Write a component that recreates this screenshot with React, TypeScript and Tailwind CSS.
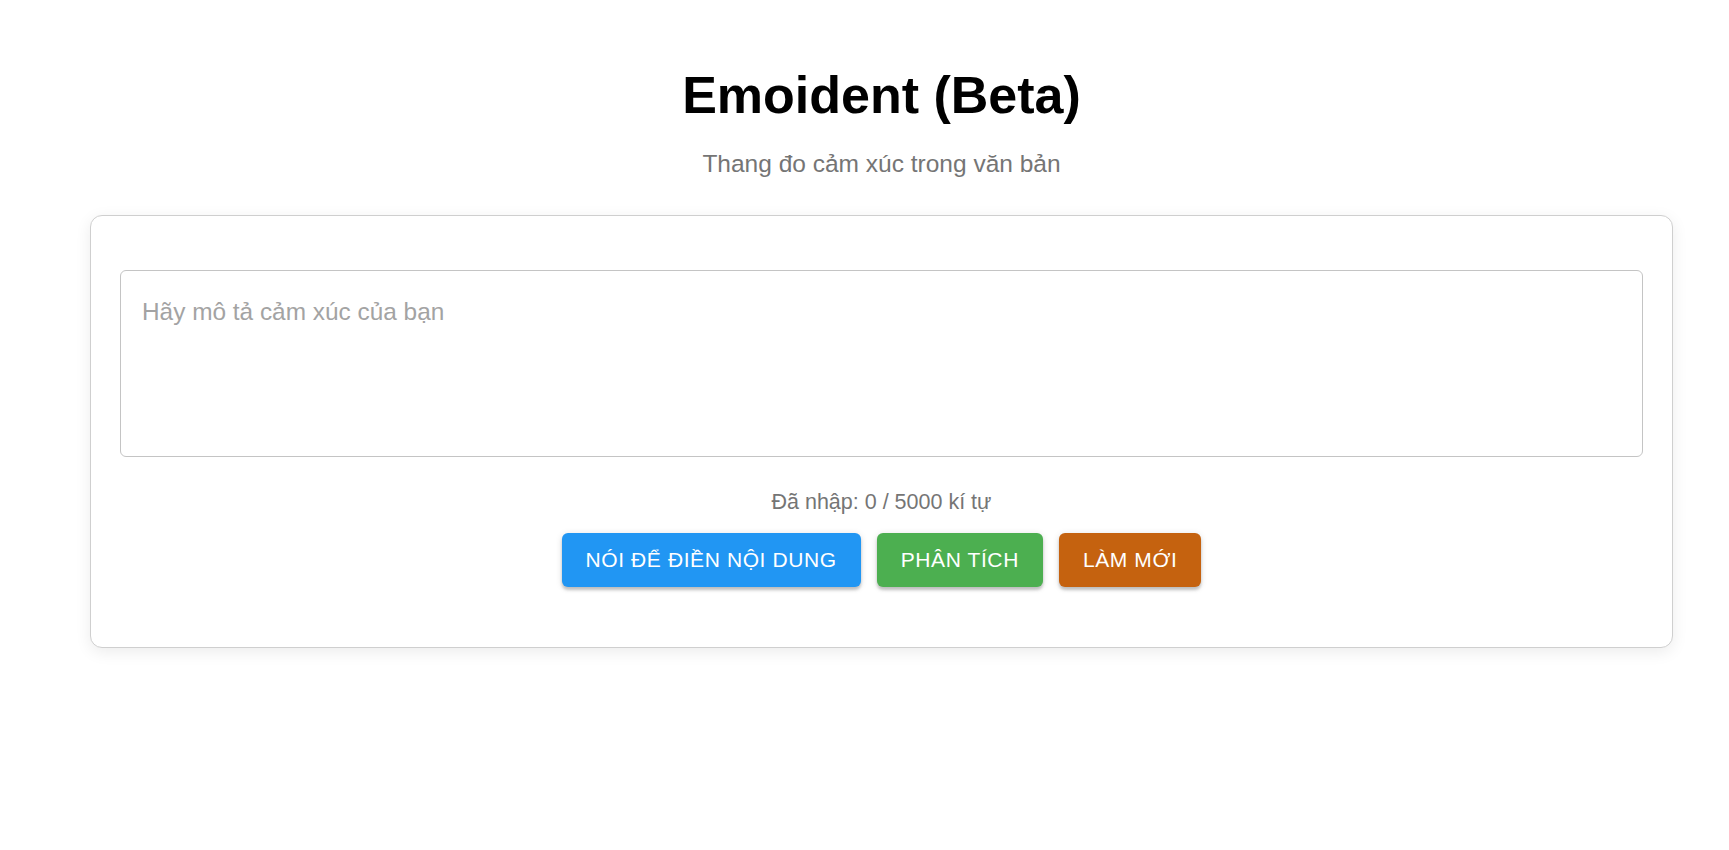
import React, { useState } from 'react';

const MAX_LEN = 5000;

export default function App() {
  const [text, setText] = useState('');

  const onChangeText = (e: React.ChangeEvent<HTMLTextAreaElement>) => {
    setText(e.target.value.slice(0, MAX_LEN));
  };

  return (
    <div className="min-h-screen bg-white pl-[90px] pr-[56px] font-['Liberation_Sans',Arial,sans-serif]">
      <h1 className="pt-[64px] text-center text-[52px] leading-[63px] font-bold text-black">
        Emoident (Beta)
      </h1>
      <p className="mt-[19px] text-center text-[24.5px] leading-[36px] text-[#757575]">
        Thang đo cảm xúc trong văn bản
      </p>

      <div className="mt-[33px] rounded-[12px] border border-[#cfcfcf] bg-white px-[29px] pt-[54px] pb-[60px] shadow-[0_4px_16px_rgba(0,0,0,0.08)]">
        <textarea
          className="block h-[187px] w-full resize-none rounded-[6px] border border-[#c4c4c4] px-[21px] pt-[24px] text-[24.4px] leading-[34.5px] text-black outline-none placeholder:text-[#a3a3a3]"
          placeholder="Hãy mô tả cảm xúc của bạn"
          value={text}
          onChange={onChangeText}
        />

        <p className="mt-[30px] text-center text-[21.5px] leading-[31.5px] text-[#757575]">
          Đã nhập: {text.length} / {MAX_LEN} kí tự
        </p>

        <div className="mt-[14px] flex justify-center gap-[16px]">
          <button className="flex h-[54px] items-center rounded-[6px] bg-[#2196f3] px-[24px] text-[21px] tracking-[0.6px] text-white shadow-[0_3px_3px_rgba(0,0,0,0.2),0_1px_7px_rgba(0,0,0,0.12)]">
            NÓI ĐỂ ĐIỀN NỘI DUNG
          </button>
          <button className="flex h-[54px] items-center rounded-[6px] bg-[#4caf50] px-[24px] text-[21px] tracking-[0.6px] text-white shadow-[0_3px_3px_rgba(0,0,0,0.2),0_1px_7px_rgba(0,0,0,0.12)]">
            PHÂN TÍCH
          </button>
          <button
            className="flex h-[54px] items-center rounded-[6px] bg-[#c5620f] px-[24px] text-[21px] tracking-[0.6px] text-white shadow-[0_3px_3px_rgba(0,0,0,0.2),0_1px_7px_rgba(0,0,0,0.12)]"
            onClick={() => setText('')}
          >
            LÀM MỚI
          </button>
        </div>
      </div>
    </div>
  );
}
